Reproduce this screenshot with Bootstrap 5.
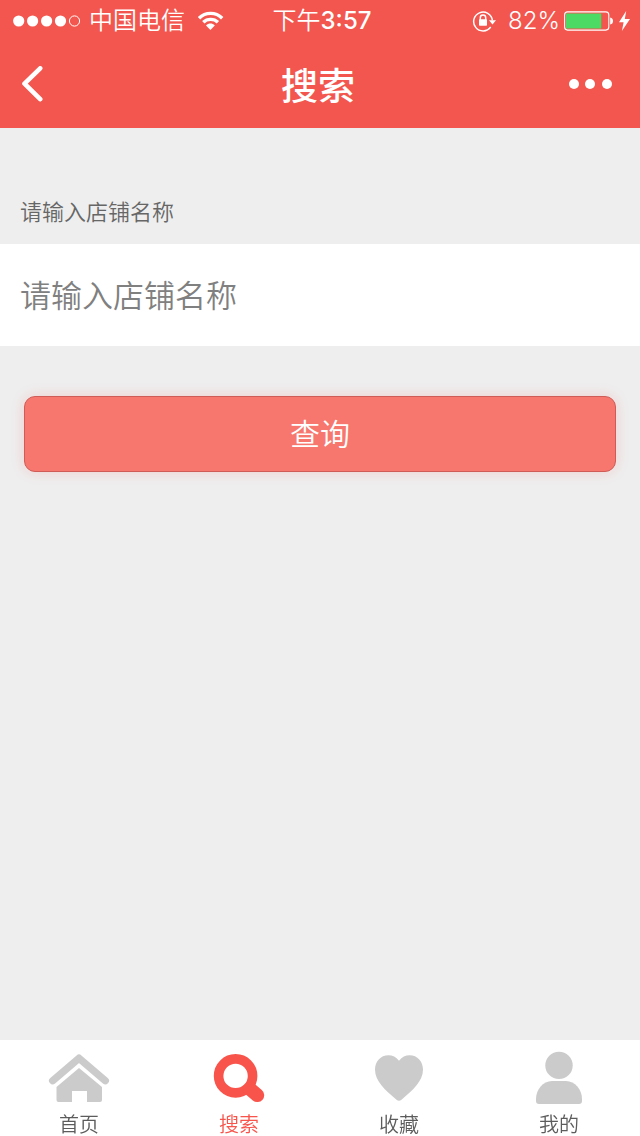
<!DOCTYPE html>
<html lang="zh-CN">
<head>
<meta charset="utf-8">
<meta name="viewport" content="width=device-width, initial-scale=1">
<title>搜索</title>
<link href="https://cdn.jsdelivr.net/npm/bootstrap@5.3.0/dist/css/bootstrap.min.css" rel="stylesheet">
<style>
  :root { --brand: #f3564e; --page: #eeeeee; --icon: #cbcbcb; }
  body { background: var(--page); font-family: Inter, "Noto Sans CJK SC", sans-serif; font-weight: 350; color: #666; }
  svg { display: block; flex: none; }
  .app-header { background: var(--brand); color: #fff; }
  .status-bar { height: 42px; font-size: 24px; line-height: 42px; padding: 0 9px 0 13px; }
  .status-bar .digits { font-weight: 500; }
  .title-bar { height: 86px; padding: 0 24px 0 20px; }
  .title-bar h1 { font-size: 37px; line-height: 48px; font-weight: 500; padding-top: 4px; }
  .icon-btn { display: block; background: none; border: 0; padding: 0; color: inherit; }
  .field-label { font-size: 22px; line-height: 32px; padding: 68px 20px 16px; color: #666; }
  .search-field { height: 102px; padding: 0 20px; font-size: 31px; font-weight: 350; color: #555; }
  .search-field::placeholder { color: #808080; opacity: 1; }
  .submit-wrap { padding: 50px 24px; }
  .btn-query { --bs-btn-color: #fff; --bs-btn-bg: #f7776e; --bs-btn-border-color: #cf5c56; --bs-btn-hover-color: #fff; --bs-btn-hover-bg: #f3564e; --bs-btn-hover-border-color: #cf5c56; --bs-btn-active-color: #fff; --bs-btn-active-bg: #f3564e;
    height: 76px; font-size: 30px; line-height: 40px; font-weight: 350; border-radius: 11px; box-shadow: 0 0 14px rgba(243, 86, 78, .2); }
  .tab-bar { background: #fff; height: 96px; }
  .tab-bar a { color: #5c5c5c; font-size: 20px; line-height: 28px; padding: 10px 2px 0 0; gap: 7px; }
  .tab-bar svg { color: var(--icon); }
  .tab-bar a.active, .tab-bar a.active svg { color: #f8544b; }
</style>
</head>
<body>
<div class="d-flex flex-column min-vh-100">
  <header class="app-header">
    <div class="status-bar row g-0 flex-nowrap">
      <div class="col d-flex align-items-center">
        <svg width="68" height="12" viewBox="0 0 68 12" fill="currentColor" aria-hidden="true"><circle cx="5.7" cy="6" r="5.6"/><circle cx="19.6" cy="6" r="5.6"/><circle cx="33.6" cy="6" r="5.6"/><circle cx="47.5" cy="6" r="5.6"/><circle cx="61.5" cy="6" r="5.1" fill="none" stroke="currentColor"/></svg>
        <span class="ms-2">中国电信</span>
        <svg class="ms-2" width="32" height="20" viewBox="0 0 32 20" fill="none" stroke="currentColor" stroke-width="3.4" aria-hidden="true"><path d="M6 7.200C12.500 .7 22.700 .7 29.200 7.200M10.300 11.300C14.200 7.400 21 7.400 24.900 11.300"/><path d="M13 14.400C15.600 12 19.200 12 21.800 14.400L17.400 19Z" fill="currentColor" stroke="none"/></svg>
      </div>
      <div class="col-auto">下午<span class="digits">3:57</span></div>
      <div class="col d-flex align-items-center justify-content-end">
        <svg width="24" height="22" viewBox="0 0 24 22" fill="none" stroke="currentColor" stroke-width="1.500" aria-hidden="true"><path d="M18.700 17A9.400 9.400 0 1 1 20.400 10.400"/><path d="M17 10.200H24L20.500 14.400Z" fill="currentColor" stroke="none"/><path d="M8.300 10V7.700A2.700 2.700 0 0 1 13.700 7.700V10"/><rect x="7" y="9.300" width="8" height="6.500" rx=".8" fill="currentColor" stroke="none"/></svg>
        <span class="ms-2 ps-1">82%</span>
        <svg class="ms-1" width="50" height="20" viewBox="0 0 50 20" aria-hidden="true"><rect x=".6" y=".9" width="44.200" height="18.200" rx="3" fill="none" stroke="currentColor" stroke-width="1.100"/><path d="M2 2.500H37.300V17.500H2Z" fill="#4cd964"/><path d="M46.200 6.500Q49 7 49 10T46.200 13.500Z" fill="currentColor"/></svg>
        <svg class="ms-1" width="13" height="20" viewBox="0 0 13 20" fill="currentColor" aria-hidden="true"><path d="M8.200 0L1 11.200H5.600L3.900 20L12 7.900H6.800Z"/></svg>
      </div>
    </div>
    <div class="title-bar row g-0 align-items-center">
      <div class="col"><button type="button" class="icon-btn" aria-label="返回"><svg width="24" height="38" viewBox="0 0 24 38" fill="none" stroke="currentColor" stroke-width="4.600" stroke-linecap="round" stroke-linejoin="round"><path d="M20.200 2.300L4.500 17.700L20.200 33.200"/></svg></button></div>
      <h1 class="col-auto m-0">搜索</h1>
      <div class="col d-flex justify-content-end"><button type="button" class="icon-btn" aria-label="更多"><svg width="48" height="12" viewBox="0 0 48 12" fill="currentColor"><circle cx="6" cy="5" r="5"/><circle cx="22" cy="5" r="5"/><circle cx="39" cy="5" r="5"/></svg></button></div>
    </div>
  </header>

  <main class="flex-grow-1">
    <form>
      <label for="shop" class="field-label d-block">请输入店铺名称</label>
      <input id="shop" type="text" class="search-field form-control border-0 rounded-0 bg-white" placeholder="请输入店铺名称">
      <div class="submit-wrap"><button type="button" class="btn btn-query w-100">查询</button></div>
    </form>
  </main>

  <nav class="tab-bar row g-0 sticky-bottom" aria-label="主导航">
    <a href="#home" class="col d-flex flex-column align-items-center text-decoration-none">
      <svg width="64" height="54" viewBox="0 0 64 54" fill="currentColor" aria-hidden="true"><path d="M5.700 30.700L32 8.200L58.300 30.700" fill="none" stroke="currentColor" stroke-width="7.400" stroke-linecap="round" stroke-linejoin="round"/><path d="M32 18L55 37V50Q55 52 53 52H40V41H25V52H11.500Q9.500 52 9.500 50V37Z"/></svg>
      <span>首页</span>
    </a>
    <a href="#search" class="active col d-flex flex-column align-items-center text-decoration-none" aria-current="page">
      <svg width="64" height="54" viewBox="-1 0 64 54" fill="none" stroke="currentColor" aria-hidden="true"><circle cx="27.600" cy="25.900" r="17" stroke-width="9.600"/><path d="M42 39L49.300 45.200" stroke-width="13.800" stroke-linecap="round"/></svg>
      <span>搜索</span>
    </a>
    <a href="#favorites" class="col d-flex flex-column align-items-center text-decoration-none">
      <svg width="64" height="54" viewBox="-1 0 64 54" fill="currentColor" aria-hidden="true"><path d="M31 10.800C34 6.700 37.500 5.200 41.500 5.200C49.500 5.200 55 11.500 55 19.500C55 31 45 40 33.500 49.700Q31 51.800 28.500 49.700C17 40 7 31 7 19.500C7 11.500 12.500 5.200 20.500 5.200C24.500 5.200 28 6.700 31 10.800Z"/></svg>
      <span>收藏</span>
    </a>
    <a href="#mine" class="col d-flex flex-column align-items-center text-decoration-none">
      <svg width="64" height="54" viewBox="-1 0 64 54" fill="currentColor" aria-hidden="true"><circle cx="31" cy="15.400" r="13.700"/><path d="M24 31H38C47 31 54 39.500 54 49V51Q54 54 51 54H11Q8 54 8 51V49C8 39.500 15 31 24 31Z"/></svg>
      <span>我的</span>
    </a>
  </nav>
</div>
<script src="https://cdn.jsdelivr.net/npm/bootstrap@5.3.0/dist/js/bootstrap.bundle.min.js"></script>
</body>
</html>
